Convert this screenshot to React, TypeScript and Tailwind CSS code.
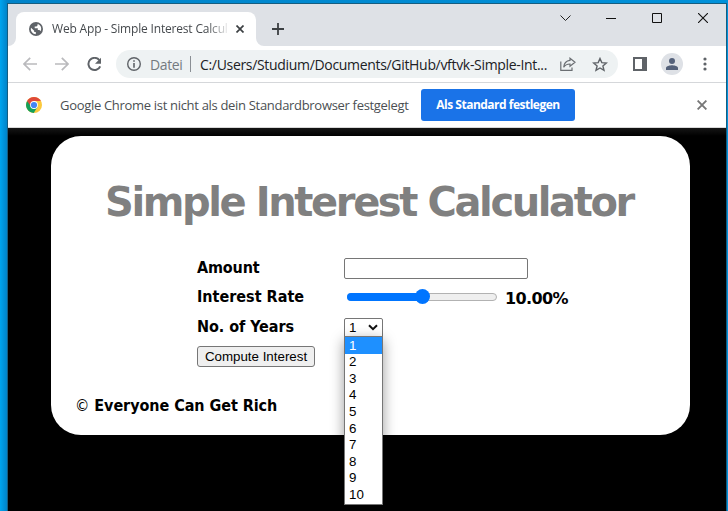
import React from "react";

const years = ["1", "2", "3", "4", "5", "6", "7", "8", "9", "10"];
const bold = "font-['DejaVu_Sans_Condensed','DejaVu_Sans',sans-serif] font-bold [font-stretch:condensed] whitespace-nowrap";
const ui = "font-['Open_Sans','Noto_Sans',sans-serif] whitespace-nowrap";

function TabStrip() {
  return (
    <div className="flex h-[42px] bg-[#dee1e6] pl-2 pt-2">
      <div className="relative flex h-[34px] w-60 shrink-0 items-center rounded-t-lg bg-white pl-[13px]">
        <svg className="absolute -left-2 bottom-0" width="8" height="8"><path d="M8 0V8H0A8 8 0 0 0 8 0Z" fill="#fff" /></svg>
        <svg className="absolute -right-2 bottom-0" width="8" height="8"><path d="M0 0V8H8A8 8 0 0 1 0 0Z" fill="#fff" /></svg>
        <svg width="14" height="14" viewBox="0 0 14 14" className="shrink-0">
          <circle cx="7" cy="7" r="7" fill="#5f6368" />
          <path d="M2 5.7 5.2 8.7V10H6.8V12.2C4 12 1.8 9.8 1.8 7ZM8.6 2V3.2L7.5 4.6H5.7V6.3H8.8V8H10.5L11.4 9.3C12.6 7.6 12.5 5 11 3.4 10.3 2.6 9.5 2.2 8.6 2Z" fill="#fff" />
        </svg>
        <div className={`${ui} ml-[9px] w-[178px] text-[12px] leading-5 tracking-[-0.18px] text-[#45494d] [mask-image:linear-gradient(to_right,black_155px,transparent_178px)]`}>
          Web App - Simple Interest Calcul
        </div>
        <svg className="ml-[6px] shrink-0" width="8" height="8" viewBox="0 0 8 8"><path d="M.5.5 7.5 7.5M7.5.5.5 7.5" stroke="#3c4043" strokeWidth="1.7" /></svg>
      </div>
      <svg className="ml-[16px] mt-[11px]" width="12" height="12" viewBox="0 0 12 12"><path d="M6 0V12M0 6H12" stroke="#3c4043" strokeWidth="1.8" /></svg>
      <div className="ml-auto mr-[18px] mt-px flex h-[10px] items-center">
        <svg width="11" height="10" viewBox="0 0 11 10"><path d="M.5 2.5 5.5 7.5 10.5 2.5" fill="none" stroke="#222" /></svg>
        <svg className="ml-[35px]" width="10" height="10"><path d="M0 5.5H10" stroke="#111" /></svg>
        <svg className="ml-[36px]" width="10" height="10"><path d="M.5.5H9.5V9.5H.5Z" fill="none" stroke="#111" /></svg>
        <svg className="ml-[36px]" width="10" height="10"><path d="M0 0 10 10M10 0 0 10" stroke="#111" strokeWidth="1.1" /></svg>
      </div>
    </div>
  );
}

function Toolbar() {
  return (
    <div className="flex h-[37px] items-center border-b border-[#d5d7da] bg-white pl-[15px]">
      <svg width="14" height="14" viewBox="0 0 14 14" fill="none" stroke="#bababd" strokeWidth="1.7"><path d="M14 7H1M7.2.8 1 7 7.2 13.2" /></svg>
      <svg className="ml-[18px]" width="14" height="14" viewBox="0 0 14 14" fill="none" stroke="#bababd" strokeWidth="1.7"><path d="M0 7H13M6.8.8 13 7 6.8 13.2" /></svg>
      <svg className="ml-[18px]" width="15" height="15" viewBox="0 0 15 15"><path d="M12.3 3.1A6.1 6.1 0 1 0 13.2 9.3" fill="none" stroke="#5f6368" strokeWidth="2" /><path d="M14 .7V6.8H8Z" fill="#5f6368" /></svg>
      <div className="ml-[14px] flex h-7 w-[502px] items-center rounded-full bg-[#eef2f3] pl-[11px]">
        <svg width="14" height="14" viewBox="0 0 14 14"><circle cx="7" cy="7" r="6.3" fill="none" stroke="#5f6368" strokeWidth="1.4" /><path d="M7 6V10.7M7 3.2V4.8" stroke="#5f6368" strokeWidth="1.6" /></svg>
        <span className={`${ui} ml-[9px] w-[32px] text-[14px] tracking-[-0.4px] text-[#747a7f]`}>Datei</span>
        <i className="ml-[8px] h-4 w-px bg-[#8a8f94]" />
        <span className={`${ui} ml-[9px] w-[349px] text-[14px] tracking-[-0.32px] text-[#202124]`}>C:/Users/Studium/Documents/GitHub/vftvk-Simple-Int...</span>
        <svg className="ml-[11px]" width="16" height="14" viewBox="0 0 16 14" fill="none" stroke="#6a6e72" strokeWidth="1.2"><path d="M.8 4.5V13.3H12V10.5M10 1.2 15 5.2 10 9.2V7C7 7 5 7.9 3.7 10.3 4 6.2 6.4 3.8 10 3.4Z" /></svg>
        <svg className="ml-[16px]" width="16" height="15" viewBox="0 0 16 15"><path d="M8 1.5 9.8 5.6 14.4 6 10.9 9 12 13.4 8 11 4 13.4 5.1 9 1.6 6 6.2 5.6Z" fill="none" stroke="#5f6368" strokeWidth="1.4" /></svg>
      </div>
      <svg className="ml-[15px]" width="14" height="14"><path d="M1 1H13V13H1Z" fill="none" stroke="#5f6368" strokeWidth="2" /><path d="M9 0H14V14H9Z" fill="#5f6368" /></svg>
      <svg className="ml-[14px]" width="22" height="22"><circle cx="11" cy="11" r="11" fill="#dee1e6" /><circle cx="11" cy="8" r="3" fill="#54617a" /><path d="M5 17V15C5 13 9 12.2 11 12.2S17 13 17 15V17Z" fill="#54617a" /></svg>
      <svg className="ml-[20px]" width="4" height="14" fill="#5f6368"><circle cx="2" cy="2" r="1.6" /><circle cx="2" cy="7" r="1.6" /><circle cx="2" cy="12" r="1.6" /></svg>
    </div>
  );
}

function InfoBar() {
  return (
    <div className="flex h-[45px] items-center border-b border-[#d8d8d8] bg-white pl-[18px]">
      <svg width="16" height="16" viewBox="0 0 16 16">
        <circle cx="8" cy="8" r="8" fill="#fbc93d" />
        <path d="M8 8 1.1 4A8 8 0 0 0 7.7 16L11.5 10Z" fill="#13a05a" />
        <path d="M1.1 4A8 8 0 0 1 14.9 4H8L4.6 9Z" fill="#df4939" />
        <circle cx="8" cy="8" r="3.9" fill="#fff" /><circle cx="8" cy="8" r="3.1" fill="#4285f4" />
      </svg>
      <span className={`${ui} ml-[18px] mt-px w-[349px] text-[13px] tracking-[-0.31px] text-[#4b4f53]`}>Google Chrome ist nicht als dein Standardbrowser festgelegt</span>
      <button className={`${ui} ml-[12px] h-8 w-[154px] rounded-[3px] bg-[#1a73e8] text-[12px] font-bold tracking-[-0.5px] text-white`}>Als Standard festlegen</button>
      <svg className="ml-auto mr-[19px]" width="10" height="10" viewBox="0 0 10 10"><path d="M.6.6 9.4 9.4M9.4.6.6 9.4" stroke="#777" strokeWidth="1.9" /></svg>
    </div>
  );
}

function YearSelect() {
  return (
    <div className="relative h-[19px] w-[39px] font-['Liberation_Sans',Arial,sans-serif] text-[13.33px] text-black">
      <div className="flex h-[19px] items-center justify-between rounded-t-[2px] border border-[#767676] bg-white pl-1 pr-1">
        <span>1</span>
        <svg width="10" height="7" viewBox="0 0 10 7"><path d="M1 1.2 5 5.2 9 1.2" fill="none" stroke="#111" strokeWidth="2" /></svg>
      </div>
      <div className="absolute left-0 top-[18px] z-10 flex h-[169px] w-[39px] flex-col border border-[#767676] bg-white pb-px shadow-[0_4px_14px_rgba(0,0,0,0.4)]">
        {years.map((y, i) => (
          <div key={y} className={`flex flex-1 items-center pl-1 leading-none ${i === 0 ? "bg-[#1e90ff] text-white" : ""}`}>{y}</div>
        ))}
      </div>
    </div>
  );
}

function Calculator() {
  return (
    <div className="ml-[43px] flex h-[299px] w-[639px] flex-col rounded-[30px] bg-white">
      <h1 className="mt-[42px] ml-[54px] h-12 whitespace-nowrap font-['DejaVu_Sans',sans-serif] text-[40px] font-bold leading-[48px] tracking-[-2.4px] text-[#808080]">Simple Interest Calculator</h1>
      <div className="ml-[146px] mt-[28px] grid grid-cols-[147px_1fr] grid-rows-[29px_30px_30px_29px] text-[16px] leading-[26px] text-black">
        <span className={`${bold} mt-px tracking-[-0.15px]`}>Amount</span>
        <input className="mt-[4px] h-[21px] w-[184px] rounded-[2px] border border-[#767676] bg-white" />
        <span className={`${bold} mt-px`}>Interest Rate</span>
        <div className="flex h-[30px] items-start">
          <div className="relative ml-[3px] mt-[10px] h-2 w-[150px] rounded-full border border-[#b2b2b2] bg-[#efefef]">
            <i className="absolute -left-px -top-px h-2 w-[76px] rounded-l-full bg-[#0075ff]" />
            <i className="absolute left-[67px] top-[-5px] size-[15px] rounded-full bg-[#0075ff]" />
          </div>
          <span className="ml-[8px] mt-[3px] whitespace-nowrap font-['DejaVu_Sans',sans-serif] font-bold tracking-[-0.6px]">10.00%</span>
        </div>
        <span className={`${bold} mt-px tracking-[-0.05px]`}>No. of Years</span>
        <div className="pt-[5px]"><YearSelect /></div>
        <button className="mt-[3px] h-[21px] w-[118px] rounded-[3px] border border-[#767676] bg-[#efefef] font-['Liberation_Sans',Arial,sans-serif] text-[13.33px] leading-none whitespace-nowrap">Compute Interest</button>
      </div>
      <footer className={`${bold} ml-[24px] mt-[21px] text-[16px] leading-[26px] tracking-[-0.06px] text-black`}><span className="font-normal">©</span> Everyone Can Get Rich</footer>
    </div>
  );
}

export default function App() {
  return (
    <div className="h-[511px] w-[728px] overflow-hidden bg-[linear-gradient(to_right,#00a5ef,#0083c9_7px,#0091da)] pl-[7px] pt-[3px]">
      <div className="h-[508px] w-[720px] border-l border-r border-t border-[#155d80] bg-black">
        <TabStrip />
        <Toolbar />
        <InfoBar />
        <main className="h-[383px] bg-[linear-gradient(#151515,#000_8px)] pt-2"><Calculator /></main>
      </div>
    </div>
  );
}
